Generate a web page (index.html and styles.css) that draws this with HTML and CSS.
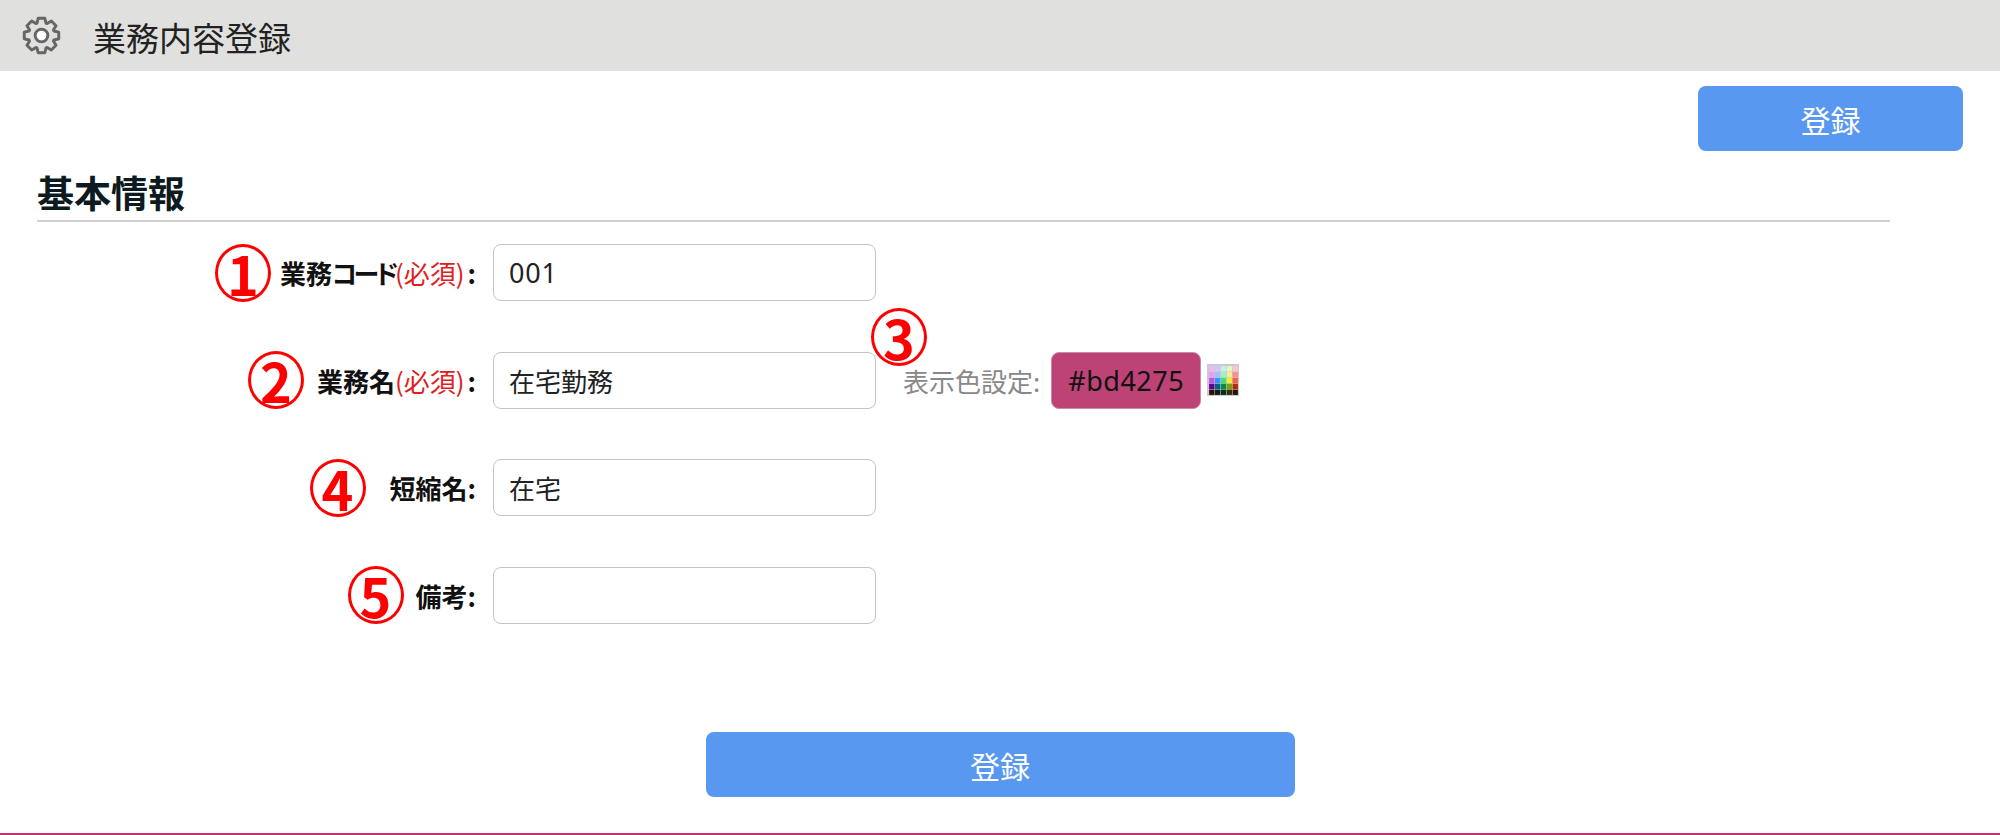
FILE: index.html
```html
<!DOCTYPE html>
<html lang="ja">
<head>
  <meta charset="UTF-8" />
  <title>業務内容登録</title>
  <link rel="stylesheet" href="styles.css">
</head>
<body>
  <div class="page">
    <header class="title-bar">
      <svg class="gear" viewBox="-20 -20 40 40" aria-hidden="true">
        <path class="gear-body" d="M12.69 -4.62L17.67 -3.43L17.67 3.43L12.69 4.62A13.5 13.5 0 0 1 12.23 5.71L14.92 10.07L10.07 14.92L5.71 12.23A13.5 13.5 0 0 1 4.62 12.69L3.43 17.67L-3.43 17.67L-4.62 12.69A13.5 13.5 0 0 1 -5.71 12.23L-10.07 14.92L-14.92 10.07L-12.23 5.71A13.5 13.5 0 0 1 -12.69 4.62L-17.67 3.43L-17.67 -3.43L-12.69 -4.62A13.5 13.5 0 0 1 -12.23 -5.71L-14.92 -10.07L-10.07 -14.92L-5.71 -12.23A13.5 13.5 0 0 1 -4.62 -12.69L-3.43 -17.67L3.43 -17.67L4.62 -12.69A13.5 13.5 0 0 1 5.71 -12.23L10.07 -14.92L14.92 -10.07L12.23 -5.71A13.5 13.5 0 0 1 12.69 -4.62Z"/>
        <circle class="gear-hole" cx="0" cy="0" r="6.5"/>
      </svg>
      <h1>業務内容登録</h1>
    </header>

    <div class="top-actions">
      <button class="btn btn-top" type="button">登録</button>
    </div>

    <section class="basic-info">
      <h2>基本情報</h2>

      <form class="form">
        <div class="row">
          <div class="label-cell">
            <span class="mark mark-1">1</span>
            <label>業務<span class="kana">コード</span><span class="required">(必須)</span>:</label>
          </div>
          <input class="input-code" type="text" value="001" />
        </div>

        <div class="row">
          <div class="label-cell">
            <span class="mark mark-2">2</span>
            <label>業務名<span class="required">(必須)</span>:</label>
          </div>
          <input type="text" value="在宅勤務" />
          <div class="color-field">
            <span class="mark mark-3">3</span>
            <label class="color-label">表示色設定:</label>
            <input class="color-input" type="text" value="#bd4275" />
            <svg class="palette" viewBox="0 0 30 30" aria-hidden="true">
              <rect width="30" height="30" fill="#c8c8d8"/>
              <g>
                <rect x="2" y="2" width="5" height="5" fill="#f0b8f0"/><rect x="7.5" y="2" width="5" height="5" fill="#d0c8f8"/><rect x="13" y="2" width="5" height="5" fill="#c8f0e8"/><rect x="18.5" y="2" width="5" height="5" fill="#e8f8b8"/><rect x="24" y="2" width="5" height="5" fill="#f8c8c8"/>
                <rect x="2" y="7.5" width="5" height="5" fill="#e8a0f0"/><rect x="7.5" y="7.5" width="5" height="5" fill="#a8c0f8"/><rect x="13" y="7.5" width="5" height="5" fill="#a0f0c8"/><rect x="18.5" y="7.5" width="5" height="5" fill="#f0f090"/><rect x="24" y="7.5" width="5" height="5" fill="#f89090"/>
                <rect x="2" y="13" width="5" height="5" fill="#c850f0"/><rect x="7.5" y="13" width="5" height="5" fill="#3098f8"/><rect x="13" y="13" width="5" height="5" fill="#40e070"/><rect x="18.5" y="13" width="5" height="5" fill="#f0f030"/><rect x="24" y="13" width="5" height="5" fill="#f86040"/>
                <rect x="2" y="18.5" width="5" height="5" fill="#600090"/><rect x="7.5" y="18.5" width="5" height="5" fill="#006090"/><rect x="13" y="18.5" width="5" height="5" fill="#009040"/><rect x="18.5" y="18.5" width="5" height="5" fill="#80a000"/><rect x="24" y="18.5" width="5" height="5" fill="#b03000"/>
                <rect x="2" y="24" width="5" height="5" fill="#301000"/><rect x="7.5" y="24" width="5" height="5" fill="#102010"/><rect x="13" y="24" width="5" height="5" fill="#003020"/><rect x="18.5" y="24" width="5" height="5" fill="#303000"/><rect x="24" y="24" width="5" height="5" fill="#301000"/>
              </g>
            </svg>
          </div>
        </div>

        <div class="row">
          <div class="label-cell">
            <span class="mark mark-4">4</span>
            <label>短縮名:</label>
          </div>
          <input type="text" value="在宅" />
        </div>

        <div class="row">
          <div class="label-cell">
            <span class="mark mark-5">5</span>
            <label>備考:</label>
          </div>
          <input type="text" value="" />
        </div>
      </form>
    </section>

    <div class="bottom-actions">
      <button class="btn btn-bottom" type="button">登録</button>
    </div>
  </div>
</body>
</html>
```

FILE: styles.css
```css
html, body {
  margin: 0;
  padding: 0;
  background: #fff;
}
body {
  font-family: "Noto Sans CJK JP", "Noto Sans", sans-serif;
  color: #111;
}
.page {
  height: 835px;
  box-sizing: border-box;
  border-bottom: 2px solid #c8326e;
  overflow: hidden;
}
.title-bar {
  display: flex;
  align-items: center;
  height: 71px;
  background: #e0e0de;
  padding-left: 22px;
}
.gear {
  width: 39px;
  height: 39px;
  margin-right: 32px;
}
.gear-body {
  fill: none;
  stroke: #666;
  stroke-width: 3;
  stroke-linejoin: round;
}
.gear-hole {
  fill: #fff;
  stroke: #666;
  stroke-width: 3;
}
.title-bar h1 {
  margin: 2px 0 0;
  font-size: 33px;
  font-weight: 400;
  color: #222;
}
.top-actions {
  display: flex;
  justify-content: flex-end;
  padding: 15px 37px 0 0;
}
.btn {
  height: 65px;
  border: none;
  border-radius: 8px;
  background: #5898f0;
  color: #fff;
  font-family: inherit;
  font-size: 30px;
  cursor: pointer;
}
.btn-top {
  width: 265px;
}
.btn-bottom {
  width: 589px;
}
.basic-info {
  margin: 17px 110px 0 37px;
}
.basic-info h2 {
  margin: 0;
  height: 52px;
  line-height: 48px;
  font-size: 37px;
  font-weight: 700;
  color: #0d1a20;
  border-bottom: 2px solid #d0d0d0;
}
.form {
  padding-top: 22px;
}
.row {
  display: flex;
  align-items: center;
  height: 57px;
  margin-bottom: 50.5px;
}
.label-cell {
  display: flex;
  align-items: center;
  justify-content: flex-end;
  width: 439px;
  margin-right: 17px;
}
.label-cell label {
  font-size: 26px;
  font-weight: 700;
  color: #111;
  white-space: nowrap;
}
.kana {
  font-feature-settings: "palt";
  letter-spacing: -3.5px;
}
.required {
  padding: 0 3px 0 0;
  font-weight: 400;
  color: #e02020;
}
.mark {
  display: flex;
  align-items: center;
  justify-content: center;
  box-sizing: border-box;
  flex: none;
  width: 56px;
  height: 58px;
  border: 3px solid #f00;
  border-radius: 50%;
  background: #fff;
  color: #f00;
  font-family: "Noto Sans CJK JP", sans-serif;
  font-size: 54px;
  font-weight: 700;
  line-height: 1;
}
.mark-1 { margin-right: 9px; }
.mark-2 { margin-right: 13px; }
.mark-4 { margin-right: 24px; }
.mark-5 { margin-right: 12px; }
input {
  box-sizing: border-box;
  width: 383px;
  height: 57px;
  padding: 0 15px;
  border: 1.5px solid #c4c4c4;
  border-radius: 8px;
  background: #fff;
  color: #222;
  font-family: "Noto Sans CJK JP", sans-serif;
  font-size: 26px;
}
.input-code {
  font-family: "Noto Sans", sans-serif;
  font-size: 27px;
  letter-spacing: 0.8px;
}
.color-field {
  position: relative;
  display: flex;
  align-items: center;
  margin-left: 27px;
}
.color-field .mark {
  position: absolute;
  left: -32px;
  top: -44px;
}
.color-label {
  font-size: 26px;
  color: #888;
  margin-right: 11px;
}
.color-input {
  width: 150px;
  padding: 0;
  text-align: center;
  background: #bd4275;
  border-color: #c98aa6;
  color: #111;
  font-family: "Noto Sans", sans-serif;
  font-size: 27px;
  letter-spacing: 0.5px;
}
.palette {
  width: 32px;
  height: 32px;
  margin-left: 6px;
  filter: blur(0.7px);
}
.bottom-actions {
  display: flex;
  justify-content: center;
  padding-top: 58px;
}
```
